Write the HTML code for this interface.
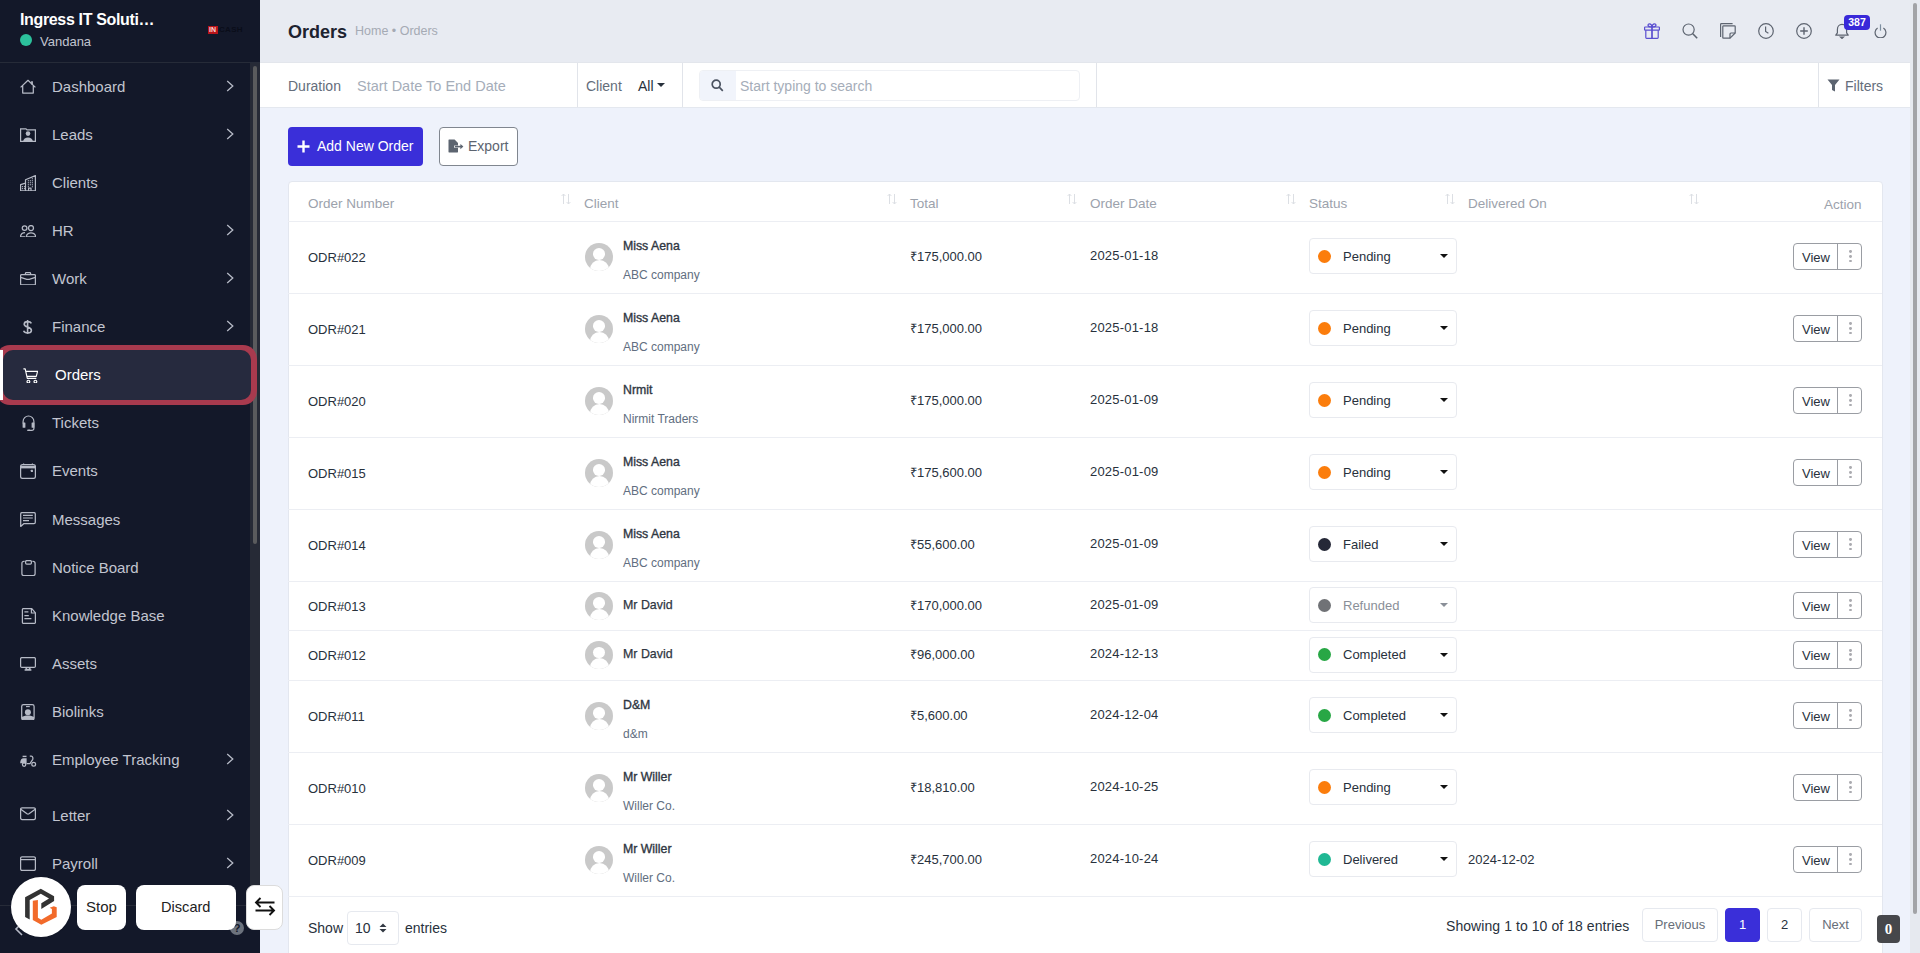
<!DOCTYPE html>
<html><head><meta charset="utf-8">
<style>
*{box-sizing:border-box;margin:0;padding:0}
html,body{width:1920px;height:953px;overflow:hidden}
body{font-family:"Liberation Sans",sans-serif;background:#eef2fb;position:relative;color:#28313c}
.a{position:absolute;white-space:nowrap}
#sb{position:absolute;left:0;top:0;width:260px;height:953px;background:#131829;overflow:hidden}
.mt{position:absolute;left:52px;font-size:15px;color:#c2c5d0;white-space:nowrap;line-height:17px}
.ic{color:#b6bac6}
.chev{position:absolute;left:226px;width:8px;height:12px}
.th{position:absolute;top:14.3px;font-size:13.5px;color:#9ca2ac;white-space:nowrap;line-height:16px}
.sort{position:absolute;top:11px;width:10px;height:12px}
.c{position:absolute;white-space:nowrap;font-size:13px;color:#28313c;line-height:15px}
.rl{position:absolute;left:0;width:1594px;height:1px;background:#eceef3}
.sel{position:absolute;left:1021px;width:148px;height:36px;border:1px solid #e8eaef;border-radius:4px;background:#fff}
.sel .dot{position:absolute;left:7.5px;top:10.5px;width:13px;height:13px;border-radius:50%}
.sel .st{position:absolute;left:33px;top:9.5px;font-size:13px;color:#28313c;line-height:15px}
.sel .car{position:absolute;left:130px;top:15px;width:0;height:0;border-left:4px solid transparent;border-right:4px solid transparent;border-top:4px solid #111}
.vb{position:absolute;left:1505px;width:69px;height:27.5px;border:1px solid #9a9da3;border-radius:4px;background:#fff}
.vb .t{position:absolute;left:8px;top:6px;font-size:13px;color:#28313c;line-height:15px}
.vb .dv{position:absolute;left:43px;top:0;width:1px;height:26px;background:#9a9da3}
.vb .d{position:absolute;left:55.2px;width:2.8px;height:2.8px;border-radius:50%;background:#ababb0}
.av{position:absolute;left:297px;width:28px;height:28px;border-radius:50%;background:#c9c9c9;overflow:hidden}
.pg{position:absolute;top:908px;height:34px;border:1px solid #e6e9ef;border-radius:4px;background:#fff;font-size:13px;line-height:31px;text-align:center;color:#676e79}
</style></head><body>

<div id="sb">
<div class="a" style="left:0;top:62px;width:260px;height:1px;background:#262b38"></div>
<div class="a" style="left:20px;top:11px;font-size:16px;font-weight:bold;color:#fff;line-height:18px;letter-spacing:-0.35px">Ingress IT Soluti…</div>
<div class="a" style="left:20px;top:34px;width:12px;height:12px;border-radius:50%;background:#2cc19c"></div>
<div class="a" style="left:40px;top:34px;font-size:13px;color:#c2c5d0;line-height:15px">Vandana</div>
<div class="a" style="left:208px;top:25.5px;width:10px;height:8.5px;background:#b8141a"></div>
<div class="a" style="left:209px;top:26px;font-size:7px;font-weight:bold;color:#ffd6d6;line-height:8px">IN</div>
<div class="a" style="left:219px;top:25px;font-size:8px;font-weight:bold;color:#0a0d19;line-height:9px;letter-spacing:0.3px">CASH</div>
<div class="a" style="left:250px;top:63px;width:10px;height:842px;background:#262a36"></div>
<div class="a" style="left:253px;top:66px;width:4px;height:478px;border-radius:2px;background:#5a5b5d"></div>
<div class="a" style="left:-4px;top:345px;width:261px;height:60px;border-radius:14px;background:#a83a4e"></div>
<div class="a" style="left:3px;top:350px;width:248px;height:50px;border-radius:10px;background:#262a3e"></div>
<div class="a" style="left:0;top:350px;width:3px;height:50px;background:#fff"></div>
<svg width="16" height="15" viewBox="0 0 16 15" style="position:absolute;left:20px;top:79px;color:#b6bac6" fill="none" stroke="currentColor"><path d="M0.6 8.4L8 1.3l7.4 7.1M2.7 6.6V14h10.6V6.6" stroke-width="1.25" stroke-linejoin="round"/><path d="M12 2.2v3.4" stroke-width="1.8"/></svg>
<div class="mt" style="top:78px">Dashboard</div>
<svg class="chev" style="top:80px" viewBox="0 0 8 12" fill="none" stroke="#b6bac6" stroke-width="1.3"><path d="M1.2 1l5.6 5-5.6 5"/></svg>
<svg width="16" height="14" viewBox="0 0 16 14" style="position:absolute;left:20px;top:127.5px;color:#b6bac6" fill="none" stroke="currentColor"><path d="M0.6 13.4V0.8h5.4l1 1h8.4v11.6z" stroke-width="1.2"/><circle cx="8" cy="5.6" r="2.3" fill="currentColor" stroke="none"/><path d="M3 13.4c.5-2.4 2.4-3.8 5-3.8s4.5 1.4 5 3.8z" fill="currentColor" stroke="none"/></svg>
<div class="mt" style="top:126px">Leads</div>
<svg class="chev" style="top:128px" viewBox="0 0 8 12" fill="none" stroke="#b6bac6" stroke-width="1.3"><path d="M1.2 1l5.6 5-5.6 5"/></svg>
<svg width="16" height="16.5" viewBox="0 0 16 16.5" style="position:absolute;left:20px;top:174.5px;color:#b6bac6" fill="none" stroke="currentColor"><path d="M0.6 15.9V9.6l4.9-1.4V4.8l9.9-4.2v15.3zM5.5 8.2v7.7M8.6 15.9v-2.8h2.4v2.8" stroke-width="1.2" stroke-linejoin="round"/><g fill="currentColor" stroke="none"><rect x="1.9" y="11.1" width="1.1" height="1.1"/><rect x="3.9" y="11.1" width="1.1" height="1.1"/><rect x="1.9" y="13.1" width="1.1" height="1.1"/><rect x="3.9" y="13.1" width="1.1" height="1.1"/><rect x="7.8" y="5.2" width="1.1" height="1.1"/><rect x="9.8" y="5.2" width="1.1" height="1.1"/><rect x="11.8" y="5.2" width="1.1" height="1.1"/><rect x="11.8" y="3.2" width="1.1" height="1.1"/><rect x="7.8" y="7.2" width="1.1" height="1.1"/><rect x="9.8" y="7.2" width="1.1" height="1.1"/><rect x="11.8" y="7.2" width="1.1" height="1.1"/><rect x="7.8" y="9.2" width="1.1" height="1.1"/><rect x="9.8" y="9.2" width="1.1" height="1.1"/><rect x="11.8" y="9.2" width="1.1" height="1.1"/><rect x="7.8" y="11.2" width="1.1" height="1.1"/><rect x="11.8" y="11.2" width="1.1" height="1.1"/></g></svg>
<div class="mt" style="top:174px">Clients</div>
<svg width="16" height="12.5" viewBox="0 0 16 12.5" style="position:absolute;left:20px;top:224.5px;color:#b6bac6" fill="none" stroke="currentColor"><circle cx="4.6" cy="3.1" r="2.35" stroke-width="1.25"/><circle cx="11" cy="3" r="2.5" stroke-width="1.25"/><path d="M5.2 11.8H1.2c-.5 0-.7-.3-.6-.8.4-2 1.8-3.2 4.4-3.4M15.3 11.8H7c-.5 0-.8-.3-.6-.8.6-2.2 2.3-3.2 4.6-3.2s4 1 4.6 3.2c.2.5-.1.8-.6.8z" stroke-width="1.25" stroke-linejoin="round"/></svg>
<div class="mt" style="top:222px">HR</div>
<svg class="chev" style="top:224px" viewBox="0 0 8 12" fill="none" stroke="#b6bac6" stroke-width="1.3"><path d="M1.2 1l5.6 5-5.6 5"/></svg>
<svg width="16" height="13.5" viewBox="0 0 16 13.5" style="position:absolute;left:20px;top:271.5px;color:#b6bac6" fill="none" stroke="currentColor"><rect x="0.6" y="2.6" width="14.8" height="10.3" rx="1" stroke-width="1.25"/><path d="M5.4 2.6V1.5c0-.5.3-.9.8-.9h3.6c.5 0 .8.4.8.9v1.1M0.7 5.4l6.1 1.9c.8.2 1.6.2 2.4 0l6.1-1.9" stroke-width="1.25"/></svg>
<div class="mt" style="top:270px">Work</div>
<svg class="chev" style="top:272px" viewBox="0 0 8 12" fill="none" stroke="#b6bac6" stroke-width="1.3"><path d="M1.2 1l5.6 5-5.6 5"/></svg>
<svg width="11" height="14.5" viewBox="0 0 11 14.5" style="position:absolute;left:22px;top:319.5px;color:#b6bac6" fill="none" stroke="currentColor"><path d="M9.4 3.3C8.8 2.2 7.6 1.6 5.6 1.6 3.6 1.6 2.2 2.7 2.2 4.2c0 3.6 7.2 2 7.2 6.1 0 1.7-1.6 2.7-3.8 2.7-2 0-3.4-.8-4-2.2M5.6 0v14.5" stroke-width="1.6"/></svg>
<div class="mt" style="top:318px">Finance</div>
<svg class="chev" style="top:320px" viewBox="0 0 8 12" fill="none" stroke="#b6bac6" stroke-width="1.3"><path d="M1.2 1l5.6 5-5.6 5"/></svg>
<svg width="15" height="15.5" viewBox="0 0 15 15.5" style="position:absolute;left:23px;top:367.5px;color:#ffffff" fill="none" stroke="currentColor"><path d="M0.4 0.8h1.8l2.1 9.6h9M2.9 3.3h11.7l-1.3 5H4.2" stroke-width="1.15" stroke-linejoin="round"/><circle cx="5.4" cy="13.6" r="1.4" stroke-width="1.15"/><circle cx="12.4" cy="13.6" r="1.4" stroke-width="1.15"/></svg>
<div class="mt" style="left:55px;top:366px;color:#fff">Orders</div>
<svg width="13" height="16" viewBox="0 0 13 16" style="position:absolute;left:21.5px;top:414.5px;color:#b6bac6" fill="none" stroke="currentColor"><path d="M1.1 8.6V6.4a5.4 5.4 0 0 1 10.8 0v7.2c0 1.1-.9 1.8-2.2 1.8H7" stroke-width="1.2"/><rect x="0.6" y="7.4" width="2.8" height="5.4" rx="0.6" fill="currentColor" stroke="none"/><rect x="9.6" y="7.4" width="2.8" height="5.4" rx="0.6" fill="currentColor" stroke="none"/><rect x="5.2" y="14.6" width="2.8" height="1.4" rx="0.6" fill="currentColor" stroke="none"/></svg>
<div class="mt" style="top:414px">Tickets</div>
<svg width="16" height="16" viewBox="0 0 16 16" style="position:absolute;left:20px;top:462.5px;color:#b6bac6" fill="none" stroke="currentColor"><rect x="0.6" y="1.6" width="14.8" height="13.8" rx="2" stroke-width="1.25"/><path d="M0.8 4.1h14.4" stroke-width="2.6"/><path d="M3.6 0.4v1.6M12.4 0.4v1.6" stroke-width="1.2"/><rect x="10.8" y="6.8" width="2.2" height="2.2" rx="0.4" fill="currentColor" stroke="none"/></svg>
<div class="mt" style="top:462px">Events</div>
<svg width="16" height="15" viewBox="0 0 16 15" style="position:absolute;left:20px;top:511.5px;color:#b6bac6" fill="none" stroke="currentColor"><path d="M0.7 14.4V1.9C0.7 1.1 1.3 .6 2 .6h12c.7 0 1.3.5 1.3 1.3v8.4c0 .8-.6 1.3-1.3 1.3H4z" stroke-width="1.25" stroke-linejoin="round"/><path d="M3 3.4h9.8M3 6h9.8M3 8.6h6" stroke-width="1.2"/></svg>
<div class="mt" style="top:511px">Messages</div>
<svg width="15" height="16" viewBox="0 0 15 16" style="position:absolute;left:20.5px;top:559.5px;color:#b6bac6" fill="none" stroke="currentColor"><path d="M3.6 1.4H3c-1.4 0-2.1.7-2.1 2v10.4c0 1.1.7 1.7 1.7 1.7h9.8c1 0 1.7-.6 1.7-1.7V3.4c0-1.3-.7-2-2.1-2h-.6" stroke-width="1.25"/><rect x="4.6" y="0.6" width="5.8" height="3.4" rx="1.1" stroke-width="1.25"/></svg>
<div class="mt" style="top:559px">Notice Board</div>
<svg width="15" height="16" viewBox="0 0 15 16" style="position:absolute;left:20.5px;top:607.5px;color:#b6bac6" fill="none" stroke="currentColor"><path d="M2.4 0.6h8.4l3.6 4.2v9.6c0 .6-.4 1-1 1H2.4c-.6 0-1-.4-1-1V1.6c0-.6.4-1 1-1z" stroke-width="1.25" stroke-linejoin="round"/><path d="M10.4 0.8v4.2h4" stroke-width="1.2"/><path d="M3.4 3.8h4M3.4 7.6h4.4M3.4 10.6h7" stroke-width="1.2"/></svg>
<div class="mt" style="top:607px">Knowledge Base</div>
<svg width="16" height="14" viewBox="0 0 16 14" style="position:absolute;left:20px;top:657px;color:#b6bac6" fill="none" stroke="currentColor"><rect x="0.6" y="0.6" width="14.8" height="9.8" rx="1.2" stroke-width="1.25"/><path d="M6.2 10.6v1.8h3.6v-1.8M4.6 13.1h6.8" stroke-width="1.5"/></svg>
<div class="mt" style="top:655px">Assets</div>
<svg width="14" height="16.5" viewBox="0 0 14 16.5" style="position:absolute;left:21px;top:703.5px;color:#b6bac6" fill="none" stroke="currentColor"><rect x="0.7" y="0.7" width="12.4" height="15.2" rx="1.8" stroke-width="1.25"/><path d="M5 2.6h3.8" stroke-width="1.1"/><circle cx="6.9" cy="8.2" r="3" fill="currentColor" stroke="none"/><path d="M0.8 13c1.4-1 3.4-1.6 6.1-1.6s4.7.6 6.1 1.6v1.2c0 1-.6 1.6-1.6 1.6H2.4c-1 0-1.6-.6-1.6-1.6z" fill="currentColor" stroke="none"/></svg>
<div class="mt" style="top:703px">Biolinks</div>
<svg width="16.5" height="12" viewBox="0 0 16.5 12" style="position:absolute;left:20px;top:754.5px;color:#b6bac6" fill="none" stroke="currentColor"><path d="M2.6 1.4h3.9" stroke-width="1.4"/><path d="M0.2 7.8c0-2.6 1.2-4.6 3.4-4.6h3v5H0.2z" fill="currentColor" stroke="none"/><path d="M6.4 8.6h3.6l2.6-4c.6-1.1.2-3.6-1.2-3.6H9.8" stroke-width="1.25"/><circle cx="4.1" cy="9.6" r="1.7" stroke-width="1.25"/><circle cx="13.7" cy="9.3" r="1.9" stroke-width="1.25"/></svg>
<div class="mt" style="top:751px">Employee Tracking</div>
<svg class="chev" style="top:753px" viewBox="0 0 8 12" fill="none" stroke="#b6bac6" stroke-width="1.3"><path d="M1.2 1l5.6 5-5.6 5"/></svg>
<svg width="16" height="13.5" viewBox="0 0 16 13.5" style="position:absolute;left:20px;top:807px;color:#b6bac6" fill="none" stroke="currentColor"><rect x="0.6" y="0.9" width="14.8" height="11.6" rx="1.4" stroke-width="1.25"/><path d="M0.8 2.2l6.2 4.6c.6.4 1.4.4 2 0l6.2-4.6" stroke-width="1.25"/></svg>
<div class="mt" style="top:807px">Letter</div>
<svg class="chev" style="top:809px" viewBox="0 0 8 12" fill="none" stroke="#b6bac6" stroke-width="1.3"><path d="M1.2 1l5.6 5-5.6 5"/></svg>
<svg width="16" height="15" viewBox="0 0 16 15" style="position:absolute;left:20px;top:856px;color:#b6bac6" fill="none" stroke="currentColor"><rect x="0.6" y="0.8" width="14.8" height="13.6" rx="1.4" stroke-width="1.25"/><path d="M0.6 3.6h14.8" stroke-width="1.25"/></svg>
<div class="mt" style="top:855px">Payroll</div>
<svg class="chev" style="top:857px" viewBox="0 0 8 12" fill="none" stroke="#b6bac6" stroke-width="1.3"><path d="M1.2 1l5.6 5-5.6 5"/></svg>
<div class="a" style="left:0;top:905px;width:260px;height:1px;background:#262b38"></div>
<svg class="a" style="left:14px;top:922px" width="10" height="14" viewBox="0 0 10 14" fill="none" stroke="#b6bac6" stroke-width="1.6"><path d="M8 1L2 7l6 6"/></svg>
<div class="a" style="left:230px;top:921px;width:14px;height:14px;border-radius:50%;background:#6c727d;color:#131829;font-size:11px;font-weight:bold;line-height:14px;text-align:center">?</div>
</div>
<div class="a" style="left:260px;top:0;width:1650px;height:63px;background:#e8ebf2"></div>
<div class="a" style="left:260px;top:61.5px;width:1650px;height:1.5px;background:#e3e6ec"></div>
<div class="a" style="left:288px;top:22px;font-size:18px;font-weight:bold;color:#1d2330;line-height:21px">Orders</div>
<div class="a" style="left:355px;top:24px;font-size:12.5px;color:#a5aab4;line-height:15px">Home • Orders</div>
<svg class="a" style="left:1644px;top:23px;color:#5a4fd0" width="16" height="16" viewBox="0 0 16 16" fill="none" stroke="currentColor" stroke-width="1.2"><rect x="0.6" y="4" width="14.8" height="3.2" rx="0.5"/><path d="M1.8 7.2v7.4c0 .5.3.8.8.8h10.8c.5 0 .8-.3.8-.8V7.2"/><path d="M8 4v11.4" stroke-width="1.7"/><path d="M8 4C7.8 2.2 6.8 0.8 5.6 0.8 4.4 0.8 3.8 1.8 4.1 2.8 4.4 3.6 5.4 4 8 4zM8 4C8.2 2.2 9.2 0.8 10.4 0.8c1.2 0 1.8 1 1.5 2C11.6 3.6 10.6 4 8 4z"/></svg>
<svg class="a" style="left:1682px;top:23px;color:#5d6470" width="16" height="16" viewBox="0 0 16 16" fill="none" stroke="currentColor" stroke-width="1.2"><circle cx="6.6" cy="6.6" r="5.6"/><path d="M10.8 10.8l4.4 4.4" stroke-width="1.6"/></svg>
<svg class="a" style="left:1720px;top:23px;color:#5d6470" width="16" height="16" viewBox="0 0 16 16" fill="none" stroke="currentColor" stroke-width="1.2"><path d="M0.6 14V1.4c0-.4.4-.8.8-.8h11.2"/><path d="M2.8 15.2V3.6c0-.5.3-.8.8-.8h10.8c.5 0 .8.3.8.8V10l-5.2 5.2H3.6c-.5 0-.8-.3-.8-.8z"/><path d="M10 15.2V11c0-.6.4-1 1-1h4.2"/></svg>
<svg class="a" style="left:1758px;top:23px;color:#5d6470" width="16" height="16" viewBox="0 0 16 16" fill="none" stroke="currentColor" stroke-width="1.2"><circle cx="8" cy="8" r="7.3"/><path d="M7.6 3.6v4.8l2.8 1.8"/></svg>
<svg class="a" style="left:1796px;top:23px;color:#5d6470" width="16" height="16" viewBox="0 0 16 16" fill="none" stroke="currentColor" stroke-width="1.2"><circle cx="8" cy="8" r="7.3"/><path d="M8 4.2v7.6M4.2 8h7.6" stroke-width="1.4"/></svg>
<svg class="a" style="left:1835px;top:23px;color:#5d6470" width="14" height="16" viewBox="0 0 14 16" fill="none" stroke="currentColor" stroke-width="1.2"><path d="M7 1.4c-2.8 0-4.6 2.2-4.6 5v3.4L0.8 12.2h12.4L11.6 9.8V6.4c0-2.8-1.8-5-4.6-5z" stroke-linejoin="round"/><path d="M5.6 14.2h2.8L7 15.4z" fill="currentColor"/></svg>
<div class="a" style="left:1844px;top:15px;width:26px;height:15px;border-radius:4px;background:#3929d9;color:#fff;font-size:10.5px;font-weight:bold;line-height:15px;text-align:center">387</div>
<svg class="a" style="left:1874px;top:24px;color:#5d6470" width="13" height="14" viewBox="0 0 13 14" fill="none" stroke="currentColor" stroke-width="1.2"><path d="M3.6 4A5.4 5.4 0 1 0 9.4 4"/><path d="M6.5 0.3v6.4" stroke="#7d8ea0"/></svg>
<div class="a" style="left:260px;top:63px;width:1650px;height:45px;background:#fff;border-bottom:1px solid #e4e8ef"></div>
<div class="a" style="left:288px;top:78px;font-size:14px;color:#646d7b;line-height:16px">Duration</div>
<div class="a" style="left:357px;top:78px;font-size:14.5px;color:#a5adb9;line-height:17px">Start Date To End Date</div>
<div class="a" style="left:577px;top:63px;width:1px;height:44px;background:#e1e4ea"></div>
<div class="a" style="left:586px;top:78px;font-size:14px;color:#646d7b;line-height:16px">Client</div>
<div class="a" style="left:638px;top:78px;font-size:14px;color:#28313c;line-height:16px">All</div>
<div class="a" style="left:657px;top:83px;width:0;height:0;border-left:4px solid transparent;border-right:4px solid transparent;border-top:4px solid #28313c"></div>
<div class="a" style="left:682px;top:63px;width:1px;height:44px;background:#e1e4ea"></div>
<div class="a" style="left:699px;top:70px;width:381px;height:30.5px;border:1px solid #eef0f4;border-radius:4px;background:#fff"></div>
<div class="a" style="left:700px;top:71px;width:36px;height:28.5px;background:#f1f4fb;border-radius:3px 0 0 3px"></div>
<svg class="a" style="left:711px;top:79px" width="13" height="13" viewBox="0 0 13 13" fill="none" stroke="#4a5260" stroke-width="1.7"><circle cx="5.2" cy="5.2" r="4"/><path d="M8.2 8.2l3.6 3.6"/></svg>
<div class="a" style="left:740px;top:78px;font-size:14px;color:#a5adb9;line-height:16px">Start typing to search</div>
<div class="a" style="left:1096px;top:63px;width:1px;height:44px;background:#e1e4ea"></div>
<div class="a" style="left:1818px;top:63px;width:1px;height:44px;background:#e1e4ea"></div>
<svg class="a" style="left:1827px;top:79px" width="13" height="13" viewBox="0 0 13 13"><path d="M0.5 0.5h12L8 6v6.5L5 11V6z" fill="#5c6470"/></svg>
<div class="a" style="left:1845px;top:78px;font-size:14px;color:#646d7b;line-height:16px">Filters</div>
<div class="a" style="left:288px;top:127px;width:135px;height:39px;background:#3a2fd9;border-radius:4px"></div>
<svg class="a" style="left:297px;top:140px" width="13" height="13" viewBox="0 0 13 13" stroke="#fff" stroke-width="2.4"><path d="M6.5 0.5v12M0.5 6.5h12"/></svg>
<div class="a" style="left:317px;top:138px;font-size:14px;color:#fff;line-height:16px">Add New Order</div>
<div class="a" style="left:439px;top:127px;width:79px;height:39px;background:#fff;border:1px solid #80868f;border-radius:4px"></div>
<svg class="a" style="left:448px;top:139px" width="16" height="14" viewBox="0 0 16 14"><path d="M0.5 1c0-.3.2-.5.5-.5h5.6L10 4v2.4H6.2v2.4H10V13c0 .3-.2.5-.5.5H1c-.3 0-.5-.2-.5-.5z" fill="#5c6470"/><path d="M7 7.6h6.2" stroke="#5c6470" stroke-width="1.6"/><path d="M12.4 5l3 2.6-3 2.6z" fill="#5c6470"/></svg>
<div class="a" style="left:468px;top:138px;font-size:14px;color:#5c6470;line-height:16px">Export</div>
<div class="a" style="left:287.5px;top:181px;width:1595px;height:780px;background:#fff;border:1px solid #e3e7ef;border-radius:4px"></div>
<div class="a" style="left:288px;top:182px;width:1594px;height:780px">
<div class="th" style="left:20px">Order Number</div>
<div class="th" style="left:296px">Client</div>
<div class="th" style="left:622px">Total</div>
<div class="th" style="left:802px">Order Date</div>
<div class="th" style="left:1021px">Status</div>
<div class="th" style="left:1180px">Delivered On</div>
<div class="th" style="left:1536px;top:15px">Action</div>
<svg class="sort" style="left:273px" viewBox="0 0 10 12" fill="none" stroke="#dcdfe4" stroke-width="1"><path d="M2.5 11V1M0.6 3l1.9-2 1.9 2M7.5 1v10M5.6 9l1.9 2 1.9-2"/></svg>
<svg class="sort" style="left:599px" viewBox="0 0 10 12" fill="none" stroke="#dcdfe4" stroke-width="1"><path d="M2.5 11V1M0.6 3l1.9-2 1.9 2M7.5 1v10M5.6 9l1.9 2 1.9-2"/></svg>
<svg class="sort" style="left:779px" viewBox="0 0 10 12" fill="none" stroke="#dcdfe4" stroke-width="1"><path d="M2.5 11V1M0.6 3l1.9-2 1.9 2M7.5 1v10M5.6 9l1.9 2 1.9-2"/></svg>
<svg class="sort" style="left:998px" viewBox="0 0 10 12" fill="none" stroke="#dcdfe4" stroke-width="1"><path d="M2.5 11V1M0.6 3l1.9-2 1.9 2M7.5 1v10M5.6 9l1.9 2 1.9-2"/></svg>
<svg class="sort" style="left:1157px" viewBox="0 0 10 12" fill="none" stroke="#dcdfe4" stroke-width="1"><path d="M2.5 11V1M0.6 3l1.9-2 1.9 2M7.5 1v10M5.6 9l1.9 2 1.9-2"/></svg>
<svg class="sort" style="left:1401px" viewBox="0 0 10 12" fill="none" stroke="#dcdfe4" stroke-width="1"><path d="M2.5 11V1M0.6 3l1.9-2 1.9 2M7.5 1v10M5.6 9l1.9 2 1.9-2"/></svg>
<div class="rl" style="top:39px"></div>
<div class="c" style="left:20px;top:67.5px">ODR#022</div>
<div class="av" style="top:60.5px"><div style="position:absolute;left:8px;top:5.5px;width:12px;height:11.5px;border-radius:50%;background:#fff"></div><div style="position:absolute;left:4.5px;top:17px;width:19px;height:14px;border-radius:10px 10px 0 0;background:#fff"></div></div>
<div class="c" style="left:335px;top:57.0px;font-size:12.3px;color:#2f3642;-webkit-text-stroke:0.35px #2f3642;line-height:14px">Miss Aena</div>
<div class="c" style="left:335px;top:85.5px;font-size:12px;color:#616e80;line-height:14px">ABC company</div>
<div class="c" style="left:622px;top:66.5px">₹175,000.00</div>
<div class="c" style="left:802px;top:65.5px;letter-spacing:0.2px">2025-01-18</div>
<div class="sel" style="top:56.0px"><div class="dot" style="background:#fb7d0c"></div><div class="st" style="color:#28313c">Pending</div><div class="car" style="border-top-color:#111"></div></div>
<div class="vb" style="top:60.5px"><div class="t">View</div><div class="dv"></div><div class="d" style="top:6.6px"></div><div class="d" style="top:11.3px"></div><div class="d" style="top:16px"></div></div>
<div class="rl" style="top:111px"></div>
<div class="c" style="left:20px;top:139.5px">ODR#021</div>
<div class="av" style="top:132.5px"><div style="position:absolute;left:8px;top:5.5px;width:12px;height:11.5px;border-radius:50%;background:#fff"></div><div style="position:absolute;left:4.5px;top:17px;width:19px;height:14px;border-radius:10px 10px 0 0;background:#fff"></div></div>
<div class="c" style="left:335px;top:129.0px;font-size:12.3px;color:#2f3642;-webkit-text-stroke:0.35px #2f3642;line-height:14px">Miss Aena</div>
<div class="c" style="left:335px;top:157.5px;font-size:12px;color:#616e80;line-height:14px">ABC company</div>
<div class="c" style="left:622px;top:138.5px">₹175,000.00</div>
<div class="c" style="left:802px;top:137.5px;letter-spacing:0.2px">2025-01-18</div>
<div class="sel" style="top:128.0px"><div class="dot" style="background:#fb7d0c"></div><div class="st" style="color:#28313c">Pending</div><div class="car" style="border-top-color:#111"></div></div>
<div class="vb" style="top:132.5px"><div class="t">View</div><div class="dv"></div><div class="d" style="top:6.6px"></div><div class="d" style="top:11.3px"></div><div class="d" style="top:16px"></div></div>
<div class="rl" style="top:183px"></div>
<div class="c" style="left:20px;top:211.5px">ODR#020</div>
<div class="av" style="top:204.5px"><div style="position:absolute;left:8px;top:5.5px;width:12px;height:11.5px;border-radius:50%;background:#fff"></div><div style="position:absolute;left:4.5px;top:17px;width:19px;height:14px;border-radius:10px 10px 0 0;background:#fff"></div></div>
<div class="c" style="left:335px;top:201.0px;font-size:12.3px;color:#2f3642;-webkit-text-stroke:0.35px #2f3642;line-height:14px">Nrmit</div>
<div class="c" style="left:335px;top:229.5px;font-size:12px;color:#616e80;line-height:14px">Nirmit Traders</div>
<div class="c" style="left:622px;top:210.5px">₹175,000.00</div>
<div class="c" style="left:802px;top:209.5px;letter-spacing:0.2px">2025-01-09</div>
<div class="sel" style="top:200.0px"><div class="dot" style="background:#fb7d0c"></div><div class="st" style="color:#28313c">Pending</div><div class="car" style="border-top-color:#111"></div></div>
<div class="vb" style="top:204.5px"><div class="t">View</div><div class="dv"></div><div class="d" style="top:6.6px"></div><div class="d" style="top:11.3px"></div><div class="d" style="top:16px"></div></div>
<div class="rl" style="top:255px"></div>
<div class="c" style="left:20px;top:283.5px">ODR#015</div>
<div class="av" style="top:276.5px"><div style="position:absolute;left:8px;top:5.5px;width:12px;height:11.5px;border-radius:50%;background:#fff"></div><div style="position:absolute;left:4.5px;top:17px;width:19px;height:14px;border-radius:10px 10px 0 0;background:#fff"></div></div>
<div class="c" style="left:335px;top:273.0px;font-size:12.3px;color:#2f3642;-webkit-text-stroke:0.35px #2f3642;line-height:14px">Miss Aena</div>
<div class="c" style="left:335px;top:301.5px;font-size:12px;color:#616e80;line-height:14px">ABC company</div>
<div class="c" style="left:622px;top:282.5px">₹175,600.00</div>
<div class="c" style="left:802px;top:281.5px;letter-spacing:0.2px">2025-01-09</div>
<div class="sel" style="top:272.0px"><div class="dot" style="background:#fb7d0c"></div><div class="st" style="color:#28313c">Pending</div><div class="car" style="border-top-color:#111"></div></div>
<div class="vb" style="top:276.5px"><div class="t">View</div><div class="dv"></div><div class="d" style="top:6.6px"></div><div class="d" style="top:11.3px"></div><div class="d" style="top:16px"></div></div>
<div class="rl" style="top:327px"></div>
<div class="c" style="left:20px;top:355.5px">ODR#014</div>
<div class="av" style="top:348.5px"><div style="position:absolute;left:8px;top:5.5px;width:12px;height:11.5px;border-radius:50%;background:#fff"></div><div style="position:absolute;left:4.5px;top:17px;width:19px;height:14px;border-radius:10px 10px 0 0;background:#fff"></div></div>
<div class="c" style="left:335px;top:345.0px;font-size:12.3px;color:#2f3642;-webkit-text-stroke:0.35px #2f3642;line-height:14px">Miss Aena</div>
<div class="c" style="left:335px;top:373.5px;font-size:12px;color:#616e80;line-height:14px">ABC company</div>
<div class="c" style="left:622px;top:354.5px">₹55,600.00</div>
<div class="c" style="left:802px;top:353.5px;letter-spacing:0.2px">2025-01-09</div>
<div class="sel" style="top:344.0px"><div class="dot" style="background:#252837"></div><div class="st" style="color:#28313c">Failed</div><div class="car" style="border-top-color:#111"></div></div>
<div class="vb" style="top:348.5px"><div class="t">View</div><div class="dv"></div><div class="d" style="top:6.6px"></div><div class="d" style="top:11.3px"></div><div class="d" style="top:16px"></div></div>
<div class="rl" style="top:399px"></div>
<div class="c" style="left:20px;top:416.7px">ODR#013</div>
<div class="av" style="top:409.7px"><div style="position:absolute;left:8px;top:5.5px;width:12px;height:11.5px;border-radius:50%;background:#fff"></div><div style="position:absolute;left:4.5px;top:17px;width:19px;height:14px;border-radius:10px 10px 0 0;background:#fff"></div></div>
<div class="c" style="left:335px;top:415.7px;font-size:12.4px;color:#2f3642;-webkit-text-stroke:0.25px #2f3642;line-height:14px">Mr David</div>
<div class="c" style="left:622px;top:415.7px">₹170,000.00</div>
<div class="c" style="left:802px;top:414.7px;letter-spacing:0.2px">2025-01-09</div>
<div class="sel" style="top:405.2px"><div class="dot" style="background:#707276"></div><div class="st" style="color:#8a8f98">Refunded</div><div class="car" style="border-top-color:#8a8f98"></div></div>
<div class="vb" style="top:409.7px"><div class="t">View</div><div class="dv"></div><div class="d" style="top:6.6px"></div><div class="d" style="top:11.3px"></div><div class="d" style="top:16px"></div></div>
<div class="rl" style="top:448px"></div>
<div class="c" style="left:20px;top:466.2px">ODR#012</div>
<div class="av" style="top:459.2px"><div style="position:absolute;left:8px;top:5.5px;width:12px;height:11.5px;border-radius:50%;background:#fff"></div><div style="position:absolute;left:4.5px;top:17px;width:19px;height:14px;border-radius:10px 10px 0 0;background:#fff"></div></div>
<div class="c" style="left:335px;top:465.2px;font-size:12.4px;color:#2f3642;-webkit-text-stroke:0.25px #2f3642;line-height:14px">Mr David</div>
<div class="c" style="left:622px;top:465.2px">₹96,000.00</div>
<div class="c" style="left:802px;top:464.2px;letter-spacing:0.2px">2024-12-13</div>
<div class="sel" style="top:454.7px"><div class="dot" style="background:#28a745"></div><div class="st" style="color:#28313c">Completed</div><div class="car" style="border-top-color:#111"></div></div>
<div class="vb" style="top:459.2px"><div class="t">View</div><div class="dv"></div><div class="d" style="top:6.6px"></div><div class="d" style="top:11.3px"></div><div class="d" style="top:16px"></div></div>
<div class="rl" style="top:498px"></div>
<div class="c" style="left:20px;top:526.5px">ODR#011</div>
<div class="av" style="top:519.5px"><div style="position:absolute;left:8px;top:5.5px;width:12px;height:11.5px;border-radius:50%;background:#fff"></div><div style="position:absolute;left:4.5px;top:17px;width:19px;height:14px;border-radius:10px 10px 0 0;background:#fff"></div></div>
<div class="c" style="left:335px;top:516.0px;font-size:12.3px;color:#2f3642;-webkit-text-stroke:0.35px #2f3642;line-height:14px">D&amp;M</div>
<div class="c" style="left:335px;top:544.5px;font-size:12px;color:#616e80;line-height:14px">d&amp;m</div>
<div class="c" style="left:622px;top:525.5px">₹5,600.00</div>
<div class="c" style="left:802px;top:524.5px;letter-spacing:0.2px">2024-12-04</div>
<div class="sel" style="top:515.0px"><div class="dot" style="background:#28a745"></div><div class="st" style="color:#28313c">Completed</div><div class="car" style="border-top-color:#111"></div></div>
<div class="vb" style="top:519.5px"><div class="t">View</div><div class="dv"></div><div class="d" style="top:6.6px"></div><div class="d" style="top:11.3px"></div><div class="d" style="top:16px"></div></div>
<div class="rl" style="top:570px"></div>
<div class="c" style="left:20px;top:598.5px">ODR#010</div>
<div class="av" style="top:591.5px"><div style="position:absolute;left:8px;top:5.5px;width:12px;height:11.5px;border-radius:50%;background:#fff"></div><div style="position:absolute;left:4.5px;top:17px;width:19px;height:14px;border-radius:10px 10px 0 0;background:#fff"></div></div>
<div class="c" style="left:335px;top:588.0px;font-size:12.3px;color:#2f3642;-webkit-text-stroke:0.35px #2f3642;line-height:14px">Mr Willer</div>
<div class="c" style="left:335px;top:616.5px;font-size:12px;color:#616e80;line-height:14px">Willer Co.</div>
<div class="c" style="left:622px;top:597.5px">₹18,810.00</div>
<div class="c" style="left:802px;top:596.5px;letter-spacing:0.2px">2024-10-25</div>
<div class="sel" style="top:587.0px"><div class="dot" style="background:#fb7d0c"></div><div class="st" style="color:#28313c">Pending</div><div class="car" style="border-top-color:#111"></div></div>
<div class="vb" style="top:591.5px"><div class="t">View</div><div class="dv"></div><div class="d" style="top:6.6px"></div><div class="d" style="top:11.3px"></div><div class="d" style="top:16px"></div></div>
<div class="rl" style="top:642px"></div>
<div class="c" style="left:20px;top:670.5px">ODR#009</div>
<div class="av" style="top:663.5px"><div style="position:absolute;left:8px;top:5.5px;width:12px;height:11.5px;border-radius:50%;background:#fff"></div><div style="position:absolute;left:4.5px;top:17px;width:19px;height:14px;border-radius:10px 10px 0 0;background:#fff"></div></div>
<div class="c" style="left:335px;top:660.0px;font-size:12.3px;color:#2f3642;-webkit-text-stroke:0.35px #2f3642;line-height:14px">Mr Willer</div>
<div class="c" style="left:335px;top:688.5px;font-size:12px;color:#616e80;line-height:14px">Willer Co.</div>
<div class="c" style="left:622px;top:669.5px">₹245,700.00</div>
<div class="c" style="left:802px;top:668.5px;letter-spacing:0.2px">2024-10-24</div>
<div class="sel" style="top:659.0px"><div class="dot" style="background:#20b894"></div><div class="st" style="color:#28313c">Delivered</div><div class="car" style="border-top-color:#111"></div></div>
<div class="c" style="left:1180px;top:669.5px">2024-12-02</div>
<div class="vb" style="top:663.5px"><div class="t">View</div><div class="dv"></div><div class="d" style="top:6.6px"></div><div class="d" style="top:11.3px"></div><div class="d" style="top:16px"></div></div>
<div class="rl" style="top:714px"></div>
</div>
<div class="a" style="left:308px;top:920px;font-size:14px;color:#28313c;line-height:16px">Show</div>
<div class="a" style="left:347px;top:911px;width:52px;height:34px;border:1px solid #e6e9ef;border-radius:4px;background:#fff"></div>
<div class="a" style="left:355px;top:920px;font-size:14px;color:#28313c;line-height:16px">10</div>
<svg class="a" style="left:379px;top:923px" width="8" height="10" viewBox="0 0 8 10"><path d="M0.5 4L4 0.5 7.5 4zM0.5 6L4 9.5 7.5 6z" fill="#333a44"/></svg>
<div class="a" style="left:405px;top:920px;font-size:14px;color:#28313c;line-height:16px">entries</div>
<div class="a" style="left:1446px;top:918px;font-size:14px;color:#28313c;line-height:16px;letter-spacing:0.07px">Showing 1 to 10 of 18 entries</div>
<div class="pg" style="left:1642px;width:76px">Previous</div>
<div class="pg" style="left:1725px;width:35px;background:#3a2fd9;border-color:#3a2fd9;color:#fff">1</div>
<div class="pg" style="left:1767px;width:35px;color:#28313c">2</div>
<div class="pg" style="left:1809px;width:53px">Next</div>
<div class="a" style="left:1877px;top:915px;width:23px;height:28px;border-radius:4px;background:#46474b;color:#fff;font-family:'Liberation Serif',serif;font-weight:bold;font-size:15px;line-height:28px;text-align:center">0</div>
<div class="a" style="left:1910px;top:0;width:10px;height:953px;background:#e6e9ef"></div>
<div class="a" style="left:1913px;top:3px;width:4px;height:911px;border-radius:2px;background:#a2a3a6"></div>
<div class="a" style="left:11px;top:877px;width:60px;height:60px;border-radius:50%;background:#fff;box-shadow:0 0 2px rgba(0,0,0,.2)"></div>
<svg class="a" style="left:20px;top:884px" width="42" height="46" viewBox="0 0 42 46"><path d="M5.1 13.3L20.8 4.8 34.1 12.3V17.1L21.3 25.1V19.3L29 14.5 20.8 9.7 9.7 15.9V35.5L5.1 32.9z" fill="#333"/><path d="M12.8 16.7L17.9 15.9V33.8L21.3 35.7 31.9 29.5V25.1L29.7 23.7 33.8 22.2 36.7 23.2V32.9L21.3 40.8 12.8 36z" fill="#f26a2a"/></svg>
<div class="a" style="left:77px;top:885px;width:49px;height:45px;border-radius:8px;background:#fff"></div>
<div class="a" style="left:86px;top:897.5px;font-size:15px;color:#222;line-height:17px">Stop</div>
<div class="a" style="left:136px;top:885px;width:100px;height:45px;border-radius:8px;background:#fff"></div>
<div class="a" style="left:161px;top:898.5px;font-size:14.6px;color:#222;line-height:17px">Discard</div>
<div class="a" style="left:246px;top:885px;width:37px;height:45px;border-radius:8px;background:#fff;border:1px solid #dcdcdc"></div>
<svg class="a" style="left:254px;top:896px" width="22" height="22" viewBox="0 0 22 22" fill="none" stroke="#111" stroke-width="1.9"><path d="M2 6.5h18.5M6.5 2L2 6.5 6.5 11M1.5 14.5H20M15.5 10L20 14.5 15.5 19"/></svg>
</body></html>
